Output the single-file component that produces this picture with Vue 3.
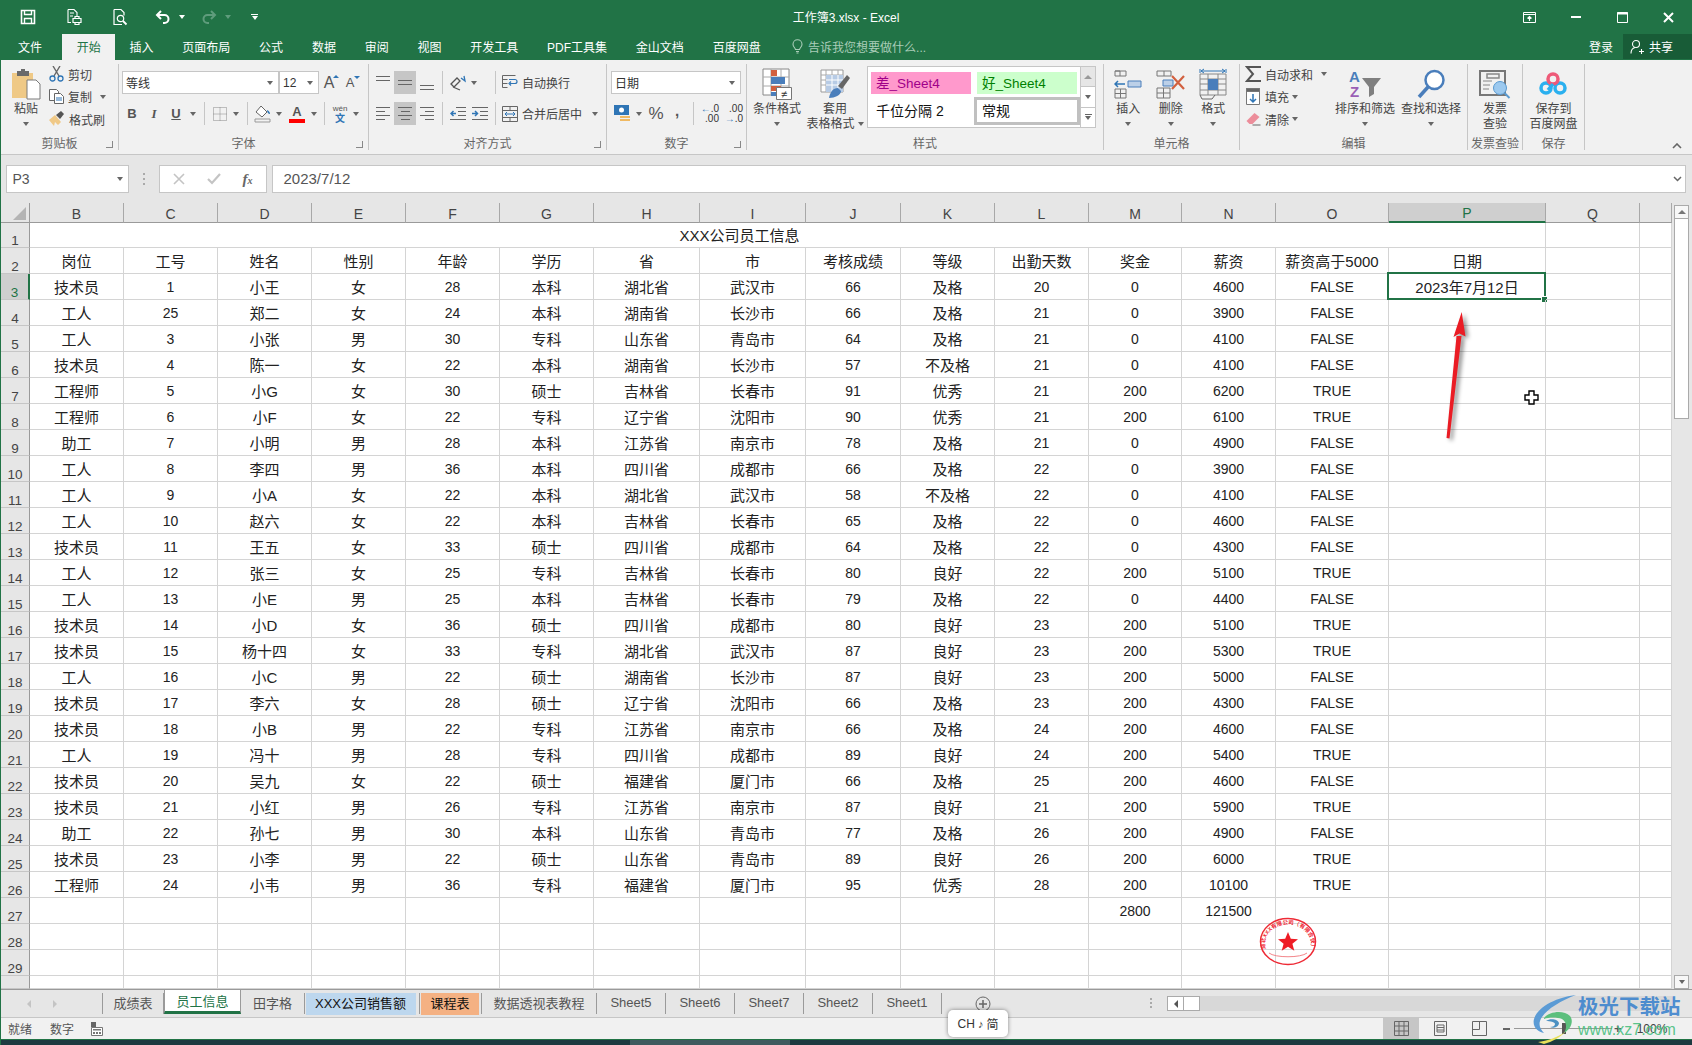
<template>
  <div class="app">
    <!-- 标题栏 -->
    <div class="titlebar">
      <div class="qat">
        <span class="qat-btn">
          <svg width="16" height="16" viewBox="0 0 16 16" fill="none" stroke="#fff" stroke-width="1.6"><path d="M1.5 1.5h13v13h-13z"/><path d="M4.5 1.5v4h7v-4M4.5 14.5v-5h7v5" stroke-width="1.4"/></svg>
        </span>
        <span class="qat-btn">
          <svg width="18" height="18" viewBox="0 0 18 18" fill="none" stroke="#fff" stroke-width="1.1"><path d="M3 1.5h6l3 3v4M3 1.5v13h3"/><path d="M5 5h4M5 8h3"/><path d="M8 10.5h8v4H8zM10 10.5v-2h4v2M10 14.5v2h4v-2" stroke-width="1.2"/></svg>
        </span>
        <span class="qat-btn">
          <svg width="18" height="18" viewBox="0 0 18 18" fill="none" stroke="#fff" stroke-width="1.2"><path d="M3 1.5h7l3 3v3M3 1.5v15h8"/><circle cx="9.5" cy="10.5" r="3.2"/><path d="M12 13l3.5 3.5" stroke-width="1.8"/></svg>
        </span>
        <span class="qat-undo">
          <svg width="16" height="14" viewBox="0 0 16 14" fill="none" stroke="#fff" stroke-width="2"><path d="M6 1L2 5l4 4"/><path d="M2 5h7.500a4 4 0 0 1 0 8H8"/></svg>
        </span>
        <i class="caret light qat-caret"></i>
        <span class="qat-redo">
          <svg width="16" height="14" viewBox="0 0 16 14" fill="none" stroke="#5f9c7c" stroke-width="2"><path d="M10 1l4 4-4 4"/><path d="M14 5H6.500a4 4 0 0 0 0 8H8"/></svg>
        </span>
        <i class="caret dim qat-caret"></i>
        <span class="qat-custom"><b></b><i class="caret light"></i></span>
      </div>
      <div class="doc-title">工作簿3.xlsx - Excel</div>
      <div class="win-btns">
        <span>
          <svg width="13" height="11" viewBox="0 0 13 11" fill="none" stroke="#fff"><path d="M.5.500h12v10H.5zM.5 2.500h12"/><path d="M6.500 9V4.500M4.500 6.500l2-2 2 2" stroke-width="1.200"/></svg>
        </span>
        <span><svg width="10" height="3" viewBox="0 0 10 3"><path d="M0 0h10v2H0z" fill="#fff"/></svg></span>
        <span>
          <svg width="11" height="11" viewBox="0 0 11 11" fill="none" stroke="#fff"><path d="M.5.500h10v10H.5z"/><path d="M0 1.500h11" stroke-width="2"/></svg>
        </span>
        <span>
          <svg width="11" height="11" viewBox="0 0 11 11" stroke="#fff" stroke-width="2"><path d="M1 1l9 9M10 1l-9 9"/></svg>
        </span>
      </div>
    </div>

    <!-- 选项卡 -->
    <div class="tabs-row">
      <span v-for="(t, i) in ribbonTabs" :key="t" class="r-tab" :class="{ active: i === 1, first: i === 0 }">{{ t }}</span>
      <span class="tell-me">
        <svg width="11" height="15" viewBox="0 0 11 15" fill="none" stroke="#a9cdb8" stroke-width="1.1"><path d="M3.500 10.500C3 8.500 1 8 1 5.200a4.500 4.500 0 0 1 9 0c0 2.800-2 3.300-2.500 5.300zM4 12.500h3M4.500 14h2"/></svg>
        告诉我您想要做什么...
      </span>
      <span class="login">登录</span>
      <span class="share">
        <svg width="14" height="16" viewBox="0 0 14 16" fill="none" stroke="#fff" stroke-width="1.100"><circle cx="6" cy="5" r="3.500"/><path d="M1 14.500c0-3.500 2-5.500 4-6M9 12.500h5M11.500 10v5"/></svg>
        共享
      </span>
    </div>

    <!-- 功能区 -->
    <div class="ribbon">
      <div class="group g-clip">
        <div class="g-body">
          <div class="big-btn paste">
            <div class="big-ico">
              <svg width="29" height="31" viewBox="0 0 29 31"><path d="M0 4h21v25H0z" fill="#efc986"/><path d="M5 2h4V0h4v2h4v5H5z" fill="#6a6a6a"/><path d="M15 11h9l4 4v15H15z" fill="#fff" stroke="#7a7a7a"/></svg>
            </div>
            <div class="big-txt">粘贴</div>
            <div class="big-arrow"><i class="caret"></i></div>
          </div>
          <div class="small-col clip-col">
            <div class="small-row">
              <svg class="s-ico" width="15" height="16" viewBox="0 0 15 16" fill="none"><path d="M4 0l6 10M11 0L5 10" stroke="#666" stroke-width="1.400"/><circle cx="3.500" cy="12.500" r="2.500" stroke="#2f75b5" stroke-width="1.300"/><circle cx="11.500" cy="12.500" r="2.500" stroke="#2f75b5" stroke-width="1.300"/></svg>
              <span>剪切</span>
            </div>
            <div class="small-row">
              <svg class="s-ico" width="15" height="15" viewBox="0 0 15 15" fill="#fff" stroke="#666"><path d="M.5.500h7l2 2v9h-9z"/><path d="M5.500 4.500h6l3 3v7h-9z"/><path d="M7 9h6M7 11h6" stroke="#2f75b5"/></svg>
              <span>复制</span>
              <i class="caret copy-caret"></i>
            </div>
            <div class="small-row">
              <svg class="s-ico" width="16" height="16" viewBox="0 0 16 16"><path d="M0 9l6-5 6 7-3 3-3-3-1 4z" fill="#f0c987"/><path d="M7 4l5-4 3 3-4 5z" fill="#555"/></svg>
              <span>格式刷</span>
            </div>
          </div>
        </div>
        <div class="g-label">剪贴板</div>
        <i class="launcher"></i>
      </div>

      <div class="group g-font">
        <div class="tool-rows">
          <div class="tool-row pl3">
            <div class="select font-name"><span>等线</span><i class="caret"></i></div>
            <div class="select font-size"><span>12</span><i class="caret"></i></div>
            <span class="grow-a">A<i class="mini up"></i></span>
            <span class="grow-a small">A<i class="mini down"></i></span>
          </div>
          <div class="tool-row pl2">
            <span class="tb w22 fmt"><b>B</b></span>
            <span class="tb w22 fmt"><i class="ital">I</i></span>
            <span class="tb w22 fmt"><b class="under">U</b></span>
            <span class="tb w12"><i class="caret"></i></span>
            <span class="vsep ml5"></span>
            <span class="tb w20 ml5">
              <svg width="14" height="14" viewBox="0 0 14 14" fill="none" stroke="#888" stroke-dasharray="1 1"><path d="M.5.500h13v13H.5zM7 .5v13M.5 7h13"/></svg>
            </span>
            <span class="tb w12"><i class="caret"></i></span>
            <span class="vsep ml5"></span>
            <span class="tb w20 ml4">
              <svg width="17" height="18" viewBox="0 0 17 18"><path d="M7 1l6 6-5 5-6-5z" fill="#fff" stroke="#666"/><path d="M13 5c2 1 3 2 3 4-2 0-3-2-3-4z" fill="#2f75b5"/><path d="M1 14h15v3H1z" fill="#f2f2f2" stroke="#999"/></svg>
            </span>
            <span class="tb w14"><i class="caret"></i></span>
            <span class="tb w22 color-a">A<i></i></span>
            <span class="tb w12"><i class="caret"></i></span>
            <span class="vsep ml4"></span>
            <span class="tb w22 ml4 wen">wén<b>文</b></span>
            <span class="tb w10"><i class="caret"></i></span>
          </div>
        </div>
        <div class="g-label">字体</div>
        <i class="launcher"></i>
      </div>

      <div class="group g-align">
        <div class="tool-rows">
          <div class="tool-row pl3">
            <span class="tb w22"><span class="al"><i></i><i></i></span></span>
            <span class="tb w22 on"><span class="al mid"><i></i><i></i></span></span>
            <span class="tb w22"><span class="al bot"><i></i><i></i></span></span>
            <span class="vsep ml4"></span>
            <span class="tb w22 ml4">
              <svg width="16" height="16" viewBox="0 0 16 16" fill="none" stroke="#555" stroke-width="1.300"><path d="M1 9l6-6 3 3-6 6zM3 12l7 3"/><path d="M11 3l4 3-1-5" stroke="#2f75b5"/></svg>
            </span>
            <span class="tb w10"><i class="caret"></i></span>
            <span class="vsep ml16"></span>
            <span class="tb w20 ml4">
              <svg width="16" height="15" viewBox="0 0 16 15" fill="none" stroke="#666"><path d="M.5.500h13M.5 4.500h5M.5 8.500h5M.5 12.500h5M.5.500v12"/><path d="M8 8.500h5a2 2 0 0 0 0-4H7M9 6.500l-2 2 2 2" stroke="#2f75b5" stroke-width="1.200"/></svg>
            </span>
            <span class="tool-text">自动换行</span>
          </div>
          <div class="tool-row pl3">
            <span class="tb w22"><span class="ah left"><i></i><i></i><i></i><i></i></span></span>
            <span class="tb w22 on"><span class="ah center"><i></i><i></i><i></i><i></i></span></span>
            <span class="tb w22"><span class="ah right"><i></i><i></i><i></i><i></i></span></span>
            <span class="vsep ml4"></span>
            <span class="tb w22 ml4">
              <svg width="16" height="13" viewBox="0 0 16 13" fill="none" stroke="#666"><path d="M6 .5h10M8 4.500h8M8 8.500h8M0 12.500h16"/><path d="M6 6.500H1M3.500 4l-2.500 2.500L3.500 9" stroke="#2f75b5" stroke-width="1.500"/></svg>
            </span>
            <span class="tb w22">
              <svg width="16" height="13" viewBox="0 0 16 13" fill="none" stroke="#666"><path d="M0 .5h16M8 4.500h8M8 8.500h8M0 12.500h16"/><path d="M0 6.500h5M3 4l2.500 2.500L3 9" stroke="#2f75b5" stroke-width="1.500"/></svg>
            </span>
            <span class="vsep ml4"></span>
            <span class="tb w20 ml4">
              <svg width="16" height="16" viewBox="0 0 16 16" fill="none" stroke="#666"><path d="M.5.500h15v15H.5zM.5 4.500h15M.5 11.500h15M8 .5v4M8 11.500v4"/><path d="M3 8h10M5 6L3 8l2 2M11 6l2 2-2 2" stroke="#2f75b5"/></svg>
            </span>
            <span class="tool-text">合并后居中</span>
            <span class="tb w10 ml8"><i class="caret"></i></span>
          </div>
        </div>
        <div class="g-label">对齐方式</div>
        <i class="launcher"></i>
      </div>

      <div class="group g-num">
        <div class="tool-rows">
          <div class="tool-row pl4"><div class="select num-fmt"><span>日期</span><i class="caret"></i></div></div>
          <div class="tool-row pl4">
            <span class="tb w22">
              <svg width="17" height="17" viewBox="0 0 17 17"><path d="M0 0h15v10H0z" fill="#2f75b5"/><circle cx="7.500" cy="5" r="2.500" fill="#fff"/><path d="M6 11h10v2H6zM6 14h10v2H6z" fill="#f0b962"/></svg>
            </span>
            <span class="tb w12"><i class="caret"></i></span>
            <span class="tb w22 pct">%</span>
            <span class="tb w20 comma">,</span>
            <span class="vsep ml6"></span>
            <span class="tb w22 ml3 dec"><em>←</em>.0<br />.00</span>
            <span class="tb w24 dec">.00<br /><em>→</em>.0</span>
          </div>
        </div>
        <div class="g-label">数字</div>
        <i class="launcher"></i>
      </div>

      <div class="group g-style">
        <div class="g-body">
          <div class="big-btn cond">
            <div class="big-ico">
              <svg width="30" height="32" viewBox="0 0 30 32"><path d="M1 1h26v26H1z" fill="#fff" stroke="#888"/><path d="M1 9h26M1 18h26M9 1v26M19 1v26" stroke="#aaa"/><path d="M9 2h6v6H9z" fill="#d2603f"/><path d="M9 9h14v7H9z" fill="#4a7ebb"/><path d="M9 18h10v5H9z" fill="#d2603f"/><path d="M9 24h5v4H9z" fill="#4a7ebb"/><path d="M14.500 19.500h15v12h-15z" fill="#fff" stroke="#777"/><text x="22" y="30" font-size="11" text-anchor="middle" fill="#333">≠</text></svg>
            </div>
            <div class="big-txt">条件格式</div>
            <div class="big-arrow"><i class="caret"></i></div>
          </div>
          <div class="big-btn tblfmt">
            <div class="big-ico">
              <svg width="30" height="30" viewBox="0 0 30 30"><path d="M1 1h22v22H1z" fill="#fff" stroke="#999"/><path d="M1 6h22M1 11h22M1 16h22M6 1v22M12 1v22M18 1v22" stroke="#aaa"/><path d="M6 6h17v17H6z" fill="#b7cbe5"/><path d="M6 11h17M6 16h17M12 6v17M18 6v17" stroke="#fff"/><path d="M18 17l9-11 3 3-8 11z" fill="#666"/><path d="M9 29c1-6 4-10 9-10l3 3c0 4-6 7-12 7z" fill="#4a7ebb"/></svg>
            </div>
            <div class="big-txt">套用</div>
            <div class="big-txt row-txt">表格格式<i class="caret"></i></div>
          </div>
          <div class="gallery">
            <div class="gal-grid">
              <span class="gal-cell bad">差_Sheet4</span>
              <span class="gal-cell good">好_Sheet4</span>
              <span class="gal-cell plain">千位分隔 2</span>
              <span class="gal-cell normal">常规</span>
            </div>
            <div class="gal-scroll">
              <span class="disabled"><i class="tri-up"></i></span>
              <span><i class="caret"></i></span>
              <span class="more"><b></b><i class="caret"></i></span>
            </div>
          </div>
        </div>
        <div class="g-label">样式</div>
      </div>

      <div class="group g-cells">
        <div class="g-body">
          <div class="big-btn cell-btn">
            <div class="big-ico">
              <svg width="28" height="30" viewBox="0 0 28 30" fill="none" stroke="#777"><path d="M1 2h11v5H1zM1 2h5v5M1 20h11v9H1zM1 24.500h11M6.500 20v9"/><path d="M14 12h13v6H14z" fill="#bcd0e8" stroke="#4a7ebb"/><path d="M11 15H1M4 12l-3 3 3 3" stroke="#2f75b5" stroke-width="1.500"/></svg>
            </div>
            <div class="big-txt">插入</div>
            <div class="big-arrow"><i class="caret"></i></div>
          </div>
          <div class="big-btn cell-btn">
            <div class="big-ico">
              <svg width="30" height="30" viewBox="0 0 30 30" fill="none" stroke="#777"><path d="M1 2h14v5H1zM8 2v5M1 19h13v10H1zM1 24h13M7.500 19v10"/><path d="M7 11h10v6H7z" fill="#bcd0e8" stroke="#4a7ebb"/><path d="M16 7l12 13M28 7L16 20" stroke="#d2603f" stroke-width="2.200"/></svg>
            </div>
            <div class="big-txt">删除</div>
            <div class="big-arrow"><i class="caret"></i></div>
          </div>
          <div class="big-btn cell-btn">
            <div class="big-ico">
              <svg width="28" height="32" viewBox="0 0 28 32" fill="none" stroke="#888"><path d="M1 1v4M27 1v4" stroke="#2f75b5"/><path d="M2 3h24M5 1L2 3l3 2M23 1l3 2-3 2" stroke="#2f75b5"/><path d="M1 6h26v21H1zM1 11h26M1 16h26M1 22h26M9 6v21M19 6v21"/><path d="M9 11h10v11H9z" fill="#4a7ebb" stroke="none"/><path d="M1 27l2 4h10l3-4" stroke="#666"/></svg>
            </div>
            <div class="big-txt">格式</div>
            <div class="big-arrow"><i class="caret"></i></div>
          </div>
        </div>
        <div class="g-label">单元格</div>
      </div>

      <div class="group g-edit">
        <div class="g-body">
          <div class="small-col edit-col">
            <div class="small-row">
              <svg class="s-ico" width="16" height="16" viewBox="0 0 16 16" fill="none" stroke="#555" stroke-width="2"><path d="M15 2V1H2l6 7-6 7h13v-1"/></svg>
              <span>自动求和</span>
              <i class="caret sum-caret"></i>
            </div>
            <div class="small-row">
              <svg class="s-ico" width="14" height="17" viewBox="0 0 14 17" fill="#fff" stroke="#777"><path d="M.5.500h13v16H.5z"/><path d="M.5.500h13v3H.5z" fill="#666"/><path d="M7 6v8M4 11l3 3 3-3" stroke="#2f75b5" stroke-width="1.500" fill="none"/></svg>
              <span>填充</span>
              <i class="caret after-caret"></i>
            </div>
            <div class="small-row">
              <svg class="s-ico" width="15" height="14" viewBox="0 0 15 14"><path d="M1 9l8-8 5 4-7 7H4z" fill="#ec8d9a"/><path d="M7 13h8" stroke="#666"/></svg>
              <span>清除</span>
              <i class="caret after-caret"></i>
            </div>
          </div>
          <div class="big-btn sort-btn">
            <div class="big-ico">
              <svg width="32" height="30" viewBox="0 0 32 30"><text x="0" y="13" font-size="15" font-weight="700" fill="#4a7ebb">A</text><text x="1" y="28" font-size="15" font-weight="700" fill="#9a5fb5">Z</text><path d="M13 9h19l-7 9v7l-5 3V18z" fill="#7f7f7f"/></svg>
            </div>
            <div class="big-txt">排序和筛选</div>
            <div class="big-arrow"><i class="caret"></i></div>
          </div>
          <div class="big-btn find-btn">
            <div class="big-ico">
              <svg width="28" height="30" viewBox="0 0 28 30" fill="none"><circle cx="17.500" cy="11" r="9" stroke="#4a7ebb" stroke-width="2.500" fill="#fff"/><path d="M11 18L2 28" stroke="#4a7ebb" stroke-width="3.500"/></svg>
            </div>
            <div class="big-txt">查找和选择</div>
            <div class="big-arrow"><i class="caret"></i></div>
          </div>
        </div>
        <div class="g-label">编辑</div>
      </div>

      <div class="group g-inv">
        <div class="g-body center">
          <div class="big-btn">
            <div class="big-ico">
              <svg width="32" height="30" viewBox="0 0 32 30" fill="none"><path d="M1 2h25v24H1z" fill="#f1f1f1" stroke="#777" stroke-width="2"/><path d="M8 5h12v4H8z" stroke="#888" stroke-width="1.500"/><path d="M4 12h9M4 16h7M4 20h6" stroke="#888"/><circle cx="21" cy="19" r="6.500" fill="#9cc9ef" stroke="#5a9ad0"/><path d="M25.500 24l5 5" stroke="#5a9ad0" stroke-width="2"/></svg>
            </div>
            <div class="big-txt">发票</div>
            <div class="big-txt">查验</div>
          </div>
        </div>
        <div class="g-label">发票查验</div>
      </div>

      <div class="group g-save">
        <div class="g-body center">
          <div class="big-btn">
            <div class="big-ico">
              <svg width="28" height="24" viewBox="0 0 28 24" fill="none" stroke-width="3.500"><circle cx="7" cy="16" r="5" stroke="#2ab0ef"/><circle cx="21" cy="16" r="5" stroke="#2ab0ef"/><circle cx="14" cy="7" r="5" stroke="#ee5a78"/><path d="M9 18l5-6" stroke="#2ab0ef"/></svg>
            </div>
            <div class="big-txt">保存到</div>
            <div class="big-txt">百度网盘</div>
          </div>
        </div>
        <div class="g-label">保存</div>
      </div>

      <svg class="collapse" width="10" height="6" viewBox="0 0 10 6" fill="none" stroke="#666" stroke-width="1.600"><path d="M1 5l4-4 4 4"/></svg>
    </div>

    <!-- 编辑栏 -->
    <div class="formula-bar">
      <div class="name-box"><span>P3</span><i class="caret"></i></div>
      <span class="grip"></span>
      <div class="fx-btns">
        <svg width="12" height="12" viewBox="0 0 12 12" stroke="#c4c4c4" stroke-width="1.600"><path d="M1 1l10 10M11 1L1 11"/></svg>
        <svg width="14" height="12" viewBox="0 0 14 12" fill="none" stroke="#c4c4c4" stroke-width="2.200"><path d="M1 6l4 4 8-9"/></svg>
        <i class="fx">f<small>x</small></i>
      </div>
      <div class="formula-input"><span>2023/7/12</span>
        <svg width="9" height="6" viewBox="0 0 9 6" fill="none" stroke="#666" stroke-width="1.500"><path d="M1 1l3.500 3.500L8 1"/></svg>
      </div>
    </div>

    <!-- 表格 -->
    <div class="sheet-area">
      <div class="sheet">
        <div class="row head-row">
          <div class="corner"><i></i></div>
          <div v-for="c in colLetters" :key="c" class="col-head" :class="{ cur: c === 'P' }">{{ c }}</div>
          <div class="col-head"></div>
        </div>
        <div class="row row-first">
          <div class="row-head">1</div>
          <div class="cell merged">XXX公司员工信息</div>
          <div class="cell"></div>
          <div class="cell"></div>
        </div>
        <div v-for="r in rows" :key="r.n" class="row" :class="{ 'row-cut': r.n === 30 }">
          <div class="row-head" :class="{ cur: r.n === 3 }">{{ r.n === 30 ? '' : r.n }}</div>
          <div
            v-for="(v, i) in r.cells"
            :key="i"
            class="cell"
            :class="{ latin: isLatin(v), selected: r.n === 3 && i === 14 }"
          >{{ v }}</div>
        </div>
      </div>
      <div class="v-scroll">
        <span class="sb-btn"><i class="tri-up"></i></span>
        <span class="sb-thumb"></span>
        <span class="sb-btn down"><i class="caret"></i></span>
      </div>
    </div>

    <!-- 工作表标签 -->
    <div class="tabbar">
      <div class="tab-nav">
        <i class="nav-l"></i>
        <i class="nav-r"></i>
      </div>
      <div
        v-for="t in sheetTabs"
        :key="t.name"
        class="s-tab"
        :class="[t.cls]"
        :style="{ width: t.w + 'px' }"
      ><span>{{ t.name }}</span></div>
      <span class="add-sheet">
        <svg width="16" height="16" viewBox="0 0 16 16" fill="none" stroke="#666"><circle cx="8" cy="8" r="7"/><path d="M8 4v8M4 8h8" stroke-width="1.500"/></svg>
      </span>
      <span class="h-dots"></span>
      <div class="h-scroll">
        <span class="h-arrow"><i class="nav-l dark"></i></span>
        <span class="h-thumb"></span>
      </div>
    </div>

    <!-- 状态栏 -->
    <div class="statusbar">
      <span class="st-1">就绪</span>
      <span class="st-2">数字</span>
      <svg class="st-ico" width="12" height="14" viewBox="0 0 12 14"><path d="M0 0h5v5H0z" fill="#666"/><path d="M.5 5.500h11v8H.5z" fill="#fff" stroke="#777"/><path d="M2 7h8v1.500H2zM2 10h2v2H2zM5 10h2v2H5zM8 10h2v2H8z" fill="#777"/></svg>
      <span class="view on">
        <svg width="15" height="15" viewBox="0 0 15 15" fill="none" stroke="#666"><path d="M.5.500h14v14H.5zM.5 5h14M.5 10h14M5 .5v14M10 .5v14"/></svg>
      </span>
      <span class="view">
        <svg width="15" height="15" viewBox="0 0 15 15" fill="none" stroke="#666"><path d="M1.500.500h12v14h-12z"/><path d="M4 4h7v7H4zM4 6.500h7M4 9h7"/></svg>
      </span>
      <span class="view">
        <svg width="15" height="15" viewBox="0 0 15 15" fill="none" stroke="#666"><path d="M.5.500h14v14H.5zM7.500.5v8H.5"/></svg>
      </span>
      <span class="zoom-minus"></span>
      <span class="zoom-line"><i></i></span>
      <span class="zoom-plus">+</span>
      <span class="zoom-val">100%</span>
    </div>
    <div class="taskbar"><i></i></div>

    <!-- 覆盖层 -->
    <svg class="arrow" width="40" height="140" viewBox="0 0 40 140">
      <path d="M6.500 128l3 .5L21.500 26h-5zM21.700 2L13.500 27l6-3.500 6 3z" fill="#ea1c24"/>
    </svg>
    <svg class="cursor" width="15" height="15" viewBox="0 0 15 15"><path d="M5 1h5v4h4v5h-4v4H5v-4H1V5h4z" fill="#fff" stroke="#000" stroke-width="1.400"/></svg>
    <svg class="stamp" width="58" height="49" viewBox="0 0 58 49">
      <ellipse cx="29" cy="24.500" rx="27.500" ry="23" fill="none" stroke="#ee2a35" stroke-width="1.500"/>
      <defs><path id="stamp-arc" d="M7 32A23 19 0 1 1 51 32"/></defs>
      <text font-size="5.500" font-weight="700" fill="#ee2a35"><textPath href="#stamp-arc">湖北XXX有限公司（有限合伙）</textPath></text>
      <path d="M29 15l2.800 6.800 7.200.4-5.600 4.500 1.900 7-6.300-4-6.300 4 1.900-7-5.600-4.500 7.200-.4z" fill="#ee1c25"/>
      <path d="M10 36c6 5 32 5 38 0" fill="none" stroke="#f3858a"/>
    </svg>
    <div class="ime">CH <span class="moon">♪</span> 简</div>
    <div class="watermark">
      <svg width="46" height="50" viewBox="0 0 46 50" fill="none">
        <path d="M44 1C26 3 6 12 2 25c-2 8 4 13 10 14-5-5-6-10-2-16C15 15 30 6 44 1z" fill="#5b9bd5"/>
        <path d="M12 24c6-7 20-8 26-2 4 5 1 13-6 17 3-5 3-11-2-14-5-2-13-2-18 0z" fill="#5cbf7d"/>
        <path d="M14 27c4-3 12-2 13 2 0 3-4 6-9 4 3 0 5-1 5-3 0-2-5-3-9-3z" fill="#4a90c2"/>
        <path d="M6 48c8-1 22-5 28-11-5 6-14 11-22 13z" fill="#e8e05a"/>
      </svg>
      <div class="wm-text">
        <div class="wm-cn">极光下载站</div>
        <div class="wm-url">www.xz7.com</div>
      </div>
    </div>
  </div>
</template>

<script setup>
const ribbonTabs = ['文件', '开始', '插入', '页面布局', '公式', '数据', '审阅', '视图', '开发工具', 'PDF工具集', '金山文档', '百度网盘']

const colLetters = 'BCDEFGHIJKLMNOPQ'.split('')

const data = [
  '岗位 工号 姓名 性别 年龄 学历 省 市 考核成绩 等级 出勤天数 奖金 薪资 薪资高于5000 日期',
  '技术员 1 小王 女 28 本科 湖北省 武汉市 66 及格 20 0 4600 FALSE 2023年7月12日',
  '工人 25 郑二 女 24 本科 湖南省 长沙市 66 及格 21 0 3900 FALSE',
  '工人 3 小张 男 30 专科 山东省 青岛市 64 及格 21 0 4100 FALSE',
  '技术员 4 陈一 女 22 本科 湖南省 长沙市 57 不及格 21 0 4100 FALSE',
  '工程师 5 小G 女 30 硕士 吉林省 长春市 91 优秀 21 200 6200 TRUE',
  '工程师 6 小F 女 22 专科 辽宁省 沈阳市 90 优秀 21 200 6100 TRUE',
  '助工 7 小明 男 28 本科 江苏省 南京市 78 及格 21 0 4900 FALSE',
  '工人 8 李四 男 36 本科 四川省 成都市 66 及格 22 0 3900 FALSE',
  '工人 9 小A 女 22 本科 湖北省 武汉市 58 不及格 22 0 4100 FALSE',
  '工人 10 赵六 女 22 本科 吉林省 长春市 65 及格 22 0 4600 FALSE',
  '技术员 11 王五 女 33 硕士 四川省 成都市 64 及格 22 0 4300 FALSE',
  '工人 12 张三 女 25 专科 吉林省 长春市 80 良好 22 200 5100 TRUE',
  '工人 13 小E 男 25 本科 吉林省 长春市 79 及格 22 0 4400 FALSE',
  '技术员 14 小D 女 36 硕士 四川省 成都市 80 良好 23 200 5100 TRUE',
  '技术员 15 杨十四 女 33 专科 湖北省 武汉市 87 良好 23 200 5300 TRUE',
  '工人 16 小C 男 22 硕士 湖南省 长沙市 87 良好 23 200 5000 FALSE',
  '技术员 17 李六 女 28 硕士 辽宁省 沈阳市 66 及格 23 200 4300 FALSE',
  '技术员 18 小B 男 22 专科 江苏省 南京市 66 及格 24 200 4600 FALSE',
  '工人 19 冯十 男 28 专科 四川省 成都市 89 良好 24 200 5400 TRUE',
  '技术员 20 吴九 女 22 硕士 福建省 厦门市 66 及格 25 200 4600 FALSE',
  '技术员 21 小红 男 26 专科 江苏省 南京市 87 良好 21 200 5900 TRUE',
  '助工 22 孙七 男 30 本科 山东省 青岛市 77 及格 26 200 4900 FALSE',
  '技术员 23 小李 男 22 硕士 山东省 青岛市 89 良好 26 200 6000 TRUE',
  '工程师 24 小韦 男 36 专科 福建省 厦门市 95 优秀 28 200 10100 TRUE'
]

// B 到 Q 再加一列空白，共 17 格
const toCells = (line) => {
  const cells = line.split(' ')
  while (cells.length < 17) cells.push('')
  return cells
}

const rows = data.map((line, i) => ({ n: i + 2, cells: toCells(line) }))
const totals = toCells('')
totals[0] = ''
totals[11] = '2800'
totals[12] = '121500'
rows.push({ n: 27, cells: totals })
rows.push({ n: 28, cells: toCells('') })
rows.push({ n: 29, cells: toCells('') })
rows.push({ n: 30, cells: toCells('') })

const isLatin = (v) => /^[\x20-\x7e]+$/.test(v)

const sheetTabs = [
  { name: '成绩表', w: 61 },
  { name: '员工信息', w: 77, cls: 'active' },
  { name: '田字格', w: 64 },
  { name: 'XXX公司销售额', w: 115, cls: 'blue' },
  { name: '课程表', w: 62, cls: 'orange' },
  { name: '数据透视表教程', w: 115 },
  { name: 'Sheet5', w: 69 },
  { name: 'Sheet6', w: 69 },
  { name: 'Sheet7', w: 69 },
  { name: 'Sheet2', w: 69 },
  { name: 'Sheet1', w: 69 }
]
</script>

<style>
html, body {
  margin: 0;
  padding: 0;
  background: #e6e6e6;
}
</style>

<style scoped>
* {
  box-sizing: border-box;
}

.app {
  --cols: 29px 94px 94px 94px 94px 94px 94px 106px 106px 95px 94px 94px 93px 94px 113px 157px 94px 32px;
  position: relative;
  width: 1692px;
  height: 1045px;
  overflow: hidden;
  background: #e6e6e6;
  border-left: 1px solid #217346;
  font-family: "Liberation Sans", "Noto Sans CJK SC", sans-serif;
  font-size: 12px;
  color: #444;
}

i {
  font-style: normal;
}

.caret {
  display: inline-block;
  width: 0;
  height: 0;
  border-left: 3.5px solid transparent;
  border-right: 3.5px solid transparent;
  border-top: 4px solid #666;
}

.caret.light {
  border-top-color: #fff;
}

.caret.dim {
  border-top-color: #5f9c7c;
}

/* 标题栏 */
.titlebar {
  display: grid;
  grid-template-columns: 1fr auto 1fr;
  align-items: center;
  height: 34px;
  background: #217346;
  margin-left: -1px;
}

.qat {
  display: flex;
  align-items: center;
  padding-left: 5px;
}

.qat-btn {
  display: flex;
  justify-content: center;
  width: 46px;
}

.qat-undo {
  display: flex;
  justify-content: center;
  width: 20px;
  margin-left: 10px;
}

.qat-redo {
  display: flex;
  justify-content: center;
  width: 20px;
  margin-left: 14px;
}

.qat-caret {
  margin-left: 6px;
}

.qat-custom {
  display: flex;
  flex-direction: column;
  align-items: center;
  gap: 1px;
  margin-left: 20px;
}

.qat-custom b {
  display: block;
  width: 7px;
  height: 1px;
  background: #fff;
}

.doc-title {
  color: #fff;
  font-size: 12px;
  padding-bottom: 2px;
  white-space: nowrap;
}

.win-btns {
  display: flex;
  justify-content: flex-end;
}

.win-btns span {
  display: flex;
  align-items: center;
  justify-content: center;
  width: 46.500px;
}

/* 选项卡 */
.tabs-row {
  display: flex;
  align-items: stretch;
  height: 26px;
  margin-left: -1px;
  padding-left: 3.500px;
  background: #217346;
}

.r-tab {
  display: flex;
  align-items: center;
  padding: 0 14.400px 2px;
  font-size: 12px;
  color: #fff;
  white-space: nowrap;
}

.r-tab.first {
  margin-right: 6px;
}

.r-tab.active {
  background: #f1f1f1;
  color: #217346;
}

.tell-me {
  display: flex;
  align-items: center;
  gap: 5px;
  margin-left: 17px;
  padding-bottom: 1px;
  color: #a9cdb8;
  font-size: 12px;
}

.login {
  display: flex;
  align-items: center;
  margin-left: auto;
  margin-right: 10px;
  padding-bottom: 2px;
  color: #fff;
}

.share {
  display: flex;
  align-items: center;
  gap: 5px;
  width: 69px;
  padding-left: 7px;
  margin-bottom: 1px;
  background: #185c37;
  color: #fff;
}

/* 功能区 */
.ribbon {
  position: relative;
  display: flex;
  height: 95px;
  background: #f1f1f1;
  border-bottom: 1px solid #c6c6c6;
}

.group {
  position: relative;
  display: flex;
  flex-direction: column;
  height: 86px;
  margin-top: 4px;
  border-right: 1px solid #c6c6c6;
  flex-shrink: 0;
}

.g-clip { width: 118px; }
.g-font { width: 250px; }
.g-align { width: 238px; }
.g-num { width: 140px; }
.g-style { width: 357px; }
.g-cells { width: 136px; }
.g-edit { width: 228px; }
.g-inv { width: 55px; }
.g-save { width: 62px; }

.g-body {
  display: flex;
  flex: 1;
  padding-top: 3px;
}

.g-body.center {
  justify-content: center;
}

.g-label {
  height: 18px;
  margin-bottom: -3px;
  line-height: 18px;
  text-align: center;
  color: #666;
  white-space: nowrap;
}

.launcher {
  position: absolute;
  right: 5px;
  bottom: 2px;
  width: 7px;
  height: 7px;
  border-left: 1px solid #888;
  border-bottom: 1px solid #888;
  transform: scaleX(-1);
}

.collapse {
  position: absolute;
  right: 10px;
  bottom: 5px;
}

.big-btn {
  display: flex;
  flex-direction: column;
  align-items: center;
}

.big-ico {
  display: flex;
  align-items: center;
  height: 34.500px;
}

.big-txt {
  line-height: 15px;
  white-space: nowrap;
}

.big-arrow {
  display: flex;
  align-items: center;
  height: 15px;
}

.row-txt .caret {
  margin-left: 3px;
  vertical-align: middle;
}

.paste {
  width: 30px;
  margin-left: 10px;
}

.small-col {
  display: flex;
  flex-direction: column;
  margin-top: -4px;
}

.small-row {
  display: flex;
  align-items: center;
  height: 22.500px;
  white-space: nowrap;
}

.s-ico {
  flex-shrink: 0;
}

.clip-col {
  margin-left: 8px;
}

.clip-col .s-ico {
  margin-right: 4px;
}

.copy-caret {
  margin-left: 8px;
}

.edit-col {
  width: 86px;
  margin-left: 5px;
}

.edit-col .s-ico {
  width: 16px;
  margin-right: 4px;
}

.sum-caret {
  margin-left: 8px;
}

.after-caret {
  margin-left: 3px;
}

.sort-btn,
.find-btn {
  width: 64px;
  margin-left: 2px;
}

.cond {
  width: 60px;
}

.tblfmt {
  width: 56px;
}

.cell-btn {
  width: 42.500px;
}

.g-cells .g-body {
  padding-left: 3px;
}

.tool-rows {
  display: flex;
  flex-direction: column;
  gap: 8px;
  flex: 1;
  padding-top: 7px;
}

.tool-row {
  display: flex;
  align-items: center;
  height: 23px;
}

.pl2 { padding-left: 2px; }
.pl3 { padding-left: 3px; }
.pl4 { padding-left: 4px; }
.ml3 { margin-left: 3px; }
.ml4 { margin-left: 4px; }
.ml5 { margin-left: 5px; }
.ml6 { margin-left: 6px; }
.ml8 { margin-left: 8px; }
.ml16 { margin-left: 16px; }
.w10 { width: 10px; }
.w12 { width: 12px; }
.w14 { width: 14px; }
.w20 { width: 20px; }
.w22 { width: 22px; }
.w24 { width: 24px; }

.tb {
  display: flex;
  align-items: center;
  justify-content: center;
  height: 23px;
  flex-shrink: 0;
}

.tb.on {
  background: #c6c6c6;
}

.vsep {
  width: 1px;
  height: 23px;
  background: #c6c6c6;
  flex-shrink: 0;
}

.select {
  display: flex;
  align-items: center;
  justify-content: space-between;
  height: 23px;
  padding: 0 5px 0 3px;
  background: #fff;
  border: 1px solid #c6c6c6;
  font-size: 12px;
  color: #333;
}

.font-name { width: 157px; }
.font-size { width: 40px; margin-left: 0; }
.num-fmt { width: 130px; }

.grow-a {
  position: relative;
  width: 22px;
  margin-left: -1px;
  text-align: center;
  font-size: 16px;
  color: #555;
}

.grow-a.small {
  font-size: 13px;
}

.mini {
  position: absolute;
  top: 1px;
  right: 1px;
  border-left: 3px solid transparent;
  border-right: 3px solid transparent;
}

.mini.up {
  border-bottom: 3px solid #2f75b5;
}

.mini.down {
  border-top: 3px solid #2f75b5;
}

.fmt {
  font-size: 13px;
  color: #555;
}

.ital {
  font-family: "Liberation Serif", serif;
  font-style: italic;
  font-weight: 700;
}

.under {
  text-decoration: underline;
}

.color-a {
  position: relative;
  font-size: 13px;
  font-weight: 700;
  color: #555;
  padding-bottom: 5px;
}

.color-a i {
  position: absolute;
  left: 3px;
  right: 3px;
  bottom: 2px;
  height: 4px;
  background: #f00;
}

.wen {
  flex-direction: column;
  font-size: 8px;
  line-height: 9px;
  color: #555;
}

.wen b {
  font-size: 10px;
  line-height: 11px;
  color: #2f75b5;
}

.al {
  display: flex;
  flex-direction: column;
  gap: 3px;
  width: 14px;
  height: 14px;
}

.al.mid {
  justify-content: center;
}

.al.bot {
  justify-content: flex-end;
}

.al i {
  display: block;
  height: 1px;
  background: #666;
}

.ah {
  display: flex;
  flex-direction: column;
  gap: 3px;
  width: 14px;
}

.ah i {
  display: block;
  height: 1px;
  background: #666;
}

.ah i:nth-child(even) {
  width: 9px;
}

.ah.center {
  align-items: center;
}

.ah.center i:nth-child(odd),
.ah.left i:nth-child(odd),
.ah.right i:nth-child(odd) {
  width: 14px;
}

.ah.right {
  align-items: flex-end;
}

.tool-text {
  margin-left: 2px;
  white-space: nowrap;
}

.pct {
  font-size: 17px;
  color: #555;
}

.comma {
  font-size: 15px;
  font-weight: 700;
  color: #555;
  padding-bottom: 6px;
}

.dec {
  display: block;
  font-size: 10px;
  line-height: 10px;
  text-align: right;
  color: #333;
  padding-top: 2px;
}

.dec em {
  font-style: normal;
  color: #2f75b5;
}

/* 样式库 */
.gallery {
  display: flex;
  width: 229px;
  height: 62px;
  margin-left: 4px;
  margin-top: -1px;
  background: #fff;
  border: 1px solid #c6c6c6;
}

.gal-grid {
  display: grid;
  grid-template-columns: 100px 100px;
  grid-template-rows: 22px 22px;
  column-gap: 6px;
  row-gap: 6px;
  padding: 5px 0 0 3px;
}

.gal-cell {
  display: flex;
  align-items: center;
  padding: 0 0 2px 5px;
  font-size: 13.500px;
  white-space: nowrap;
}

.bad {
  background: #ff99cc;
  color: #a0008a;
}

.good {
  background: #ccffcc;
  color: #008000;
}

.plain {
  font-size: 14px;
  color: #111;
}

.normal {
  font-size: 14px;
  color: #111;
  box-shadow: 0 0 0 3px #c0c0c0;
}

.gal-scroll {
  display: flex;
  flex-direction: column;
  width: 15px;
  margin-left: auto;
  border-left: 1px solid #c6c6c6;
}

.gal-scroll span {
  display: flex;
  flex-direction: column;
  align-items: center;
  justify-content: center;
  gap: 1px;
  flex: 1;
  border-bottom: 1px solid #c6c6c6;
}

.gal-scroll span:last-child {
  border-bottom: 0;
}

.gal-scroll .disabled {
  background: #e6e6e6;
}

.gal-scroll .more b {
  display: block;
  width: 7px;
  height: 1px;
  background: #666;
}

.tri-up {
  display: inline-block;
  width: 0;
  height: 0;
  border-left: 4px solid transparent;
  border-right: 4px solid transparent;
  border-bottom: 4px solid #999;
}

/* 编辑栏 */
.formula-bar {
  display: flex;
  align-items: stretch;
  height: 35px;
  padding: 10px 6px 0 4.500px;
  background: #e6e6e6;
}

.name-box {
  display: flex;
  align-items: center;
  justify-content: space-between;
  width: 123px;
  height: 28px;
  padding: 0 5px 1px 6px;
  background: #fff;
  border: 1px solid #c6c6c6;
  font-size: 14px;
  color: #555;
}

.grip {
  width: 2px;
  height: 12px;
  margin: 8px 14px 0 14px;
  background: repeating-linear-gradient(#aaa 0 2px, transparent 2px 5px);
}

.fx-btns {
  display: flex;
  align-items: center;
  justify-content: space-between;
  width: 108px;
  height: 28px;
  padding: 0 13px;
  background: #fff;
  border: 1px solid #c6c6c6;
}

.fx {
  font-family: "Liberation Serif", serif;
  font-style: italic;
  font-weight: 700;
  font-size: 15px;
  color: #666;
}

.fx small {
  font-size: 10px;
}

.formula-input {
  display: flex;
  align-items: center;
  justify-content: space-between;
  flex: 1;
  height: 28px;
  margin-left: 5px;
  padding: 0 3px 1px 11px;
  background: #fff;
  border: 1px solid #c6c6c6;
  font-size: 15px;
  color: #555;
}

/* 表格 */
.sheet-area {
  display: flex;
  height: 799px;
  padding-top: 13px;
  background: #e6e6e6;
}

.sheet {
  width: 1671px;
  height: 786px;
  overflow: hidden;
  background: #fff;
}

.row {
  display: grid;
  grid-template-columns: var(--cols);
  height: 26px;
}

.head-row {
  height: 20px;
}

.row-first {
  height: 25px;
}

.row-first .merged {
  grid-column: span 15;
  padding-right: 96px;
}

.row-cut {
  height: 13px;
}

.corner {
  position: relative;
  background: #e6e6e6;
  border-right: 1px solid #9a9a9a;
  border-bottom: 1px solid #9a9a9a;
}

.corner i {
  position: absolute;
  right: 3px;
  bottom: 2px;
  border-style: solid;
  border-width: 0 0 13px 13px;
  border-color: transparent transparent #b4b4b4 transparent;
}

.col-head {
  display: flex;
  align-items: flex-end;
  justify-content: center;
  background: #e6e6e6;
  border-right: 1px solid #a8a8a8;
  border-bottom: 1px solid #9a9a9a;
  font-size: 14px;
  line-height: 16px;
  color: #444;
}

.col-head.cur {
  background: #cfcfcf;
  border-bottom: 2px solid #217346;
  color: #217346;
}

.row-head {
  display: flex;
  align-items: flex-end;
  justify-content: center;
  background: #e6e6e6;
  border-right: 1px solid #9a9a9a;
  border-bottom: 1px solid #c6c6c6;
  font-size: 13.500px;
  line-height: 13px;
  color: #444;
}

.row-head.cur {
  background: #cfcfcf;
  border-right: 2px solid #217346;
  color: #217346;
}

.cell {
  position: relative;
  display: flex;
  align-items: center;
  justify-content: center;
  padding-bottom: 1px;
  border-right: 1px solid #d4d4d4;
  border-bottom: 1px solid #d4d4d4;
  font-size: 15px;
  color: #222;
  white-space: nowrap;
}

.cell.latin {
  padding: 1px 0 0;
  font-size: 14px;
}

.cell.selected::before {
  content: "";
  position: absolute;
  inset: -2px -1px -1px -2px;
  border: 2px solid #217346;
}

.cell.selected::after {
  content: "";
  position: absolute;
  right: -2px;
  bottom: -3px;
  width: 5px;
  height: 5px;
  background: #217346;
  outline: 1px solid #fff;
}

.v-scroll {
  display: flex;
  flex-direction: column;
  width: 16px;
  height: 786px;
  margin-left: 2px;
  padding-top: 2px;
}

.sb-btn {
  display: flex;
  align-items: center;
  justify-content: center;
  width: 15px;
  height: 14px;
  background: #f7f7f7;
  border: 1px solid #aaa;
  flex-shrink: 0;
}

.sb-btn .tri-up {
  border-bottom-color: #777;
}

.sb-thumb {
  display: block;
  width: 15px;
  height: 200px;
  background: #fff;
  border: 1px solid #aaa;
  border-top: 0;
}

.sb-btn.down {
  margin-top: auto;
}

/* 工作表标签 */
.tabbar {
  display: flex;
  align-items: flex-start;
  height: 29px;
  background: #e6e6e6;
  border-top: 1px solid #9a9a9a;
  border-bottom: 1px solid #c6c6c6;
}

.tab-nav {
  display: flex;
  align-items: center;
  gap: 22px;
  width: 102px;
  height: 21px;
  margin-top: 3px;
  padding-left: 26px;
  border-right: 1px solid #9a9a9a;
}

.nav-l {
  display: inline-block;
  border-top: 4px solid transparent;
  border-bottom: 4px solid transparent;
  border-right: 4px solid #c4c4c4;
}

.nav-l.dark {
  border-right-color: #555;
}

.nav-r {
  display: inline-block;
  border-top: 4px solid transparent;
  border-bottom: 4px solid transparent;
  border-left: 4px solid #c4c4c4;
}

.s-tab {
  position: relative;
  display: flex;
  align-items: center;
  justify-content: center;
  height: 21px;
  margin-top: 3px;
  padding-bottom: 2px;
  border-right: 1px solid #9a9a9a;
  font-size: 13px;
  color: #555;
  white-space: nowrap;
  flex-shrink: 0;
}

.s-tab.active {
  height: 24px;
  margin-top: 0;
  padding-bottom: 0;
  background: #fff;
  border-left: 1px solid #9a9a9a;
  border-right: 1px solid #9a9a9a;
  border-bottom: 3px solid #217346;
  color: #217346;
}

.s-tab.blue,
.s-tab.orange {
  padding-bottom: 0;
}

.s-tab.blue span {
  display: flex;
  align-items: center;
  justify-content: center;
  width: 110px;
  height: 22px;
  margin-right: 3px;
  padding-bottom: 2px;
  background: #bdd7ee;
  color: #111;
}

.s-tab.orange span {
  display: flex;
  align-items: center;
  justify-content: center;
  width: 58px;
  height: 22px;
  margin-right: 1px;
  padding-bottom: 2px;
  background: #f4b183;
  color: #111;
}

.add-sheet {
  display: flex;
  margin: 6px 0 0 33px;
}

.h-dots {
  width: 2px;
  height: 11px;
  margin: 8px 0 0 159px;
  background: repeating-linear-gradient(#aaa 0 2px, transparent 2px 4px);
}

.h-scroll {
  display: flex;
  width: 505px;
  height: 15px;
  margin: 6px 0 0 15px;
  background: #d8d8d8;
}

.h-arrow {
  display: flex;
  align-items: center;
  justify-content: center;
  width: 17px;
  background: #fff;
  border: 1px solid #aaa;
}

.h-thumb {
  width: 16px;
  background: #fff;
  border: 1px solid #aaa;
  border-left: 0;
}

/* 状态栏 */
.statusbar {
  display: flex;
  align-items: center;
  height: 21px;
  background: #f1f1f1;
  color: #555;
}

.st-1 {
  margin-left: 7px;
}

.st-2 {
  margin-left: 18px;
}

.st-ico {
  margin-left: 17px;
}

.view {
  display: flex;
  align-items: center;
  justify-content: center;
  width: 36px;
  height: 21px;
  margin-left: 3px;
}

.view.on {
  margin-left: 1280px;
  background: #c6c6c6;
}

.zoom-minus {
  width: 7px;
  height: 2px;
  margin-left: 6px;
  background: #666;
}

.zoom-line {
  position: relative;
  width: 98px;
  height: 1px;
  margin-left: 4px;
  background: #999;
}

.zoom-line i {
  position: absolute;
  left: 48px;
  top: -5px;
  width: 4px;
  height: 11px;
  background: #555;
}

.zoom-plus {
  margin-left: 2px;
  font-size: 13px;
  font-weight: 700;
  color: #555;
}

.zoom-val {
  margin-left: 15px;
  color: #444;
}

.taskbar {
  height: 6px;
  background: #1d3a40;
  border-top: 1px solid #217346;
}

.taskbar i {
  display: block;
  width: 160px;
  height: 5px;
  margin-left: 629px;
  background: #3f5a5e;
}

/* 覆盖层 */
.arrow {
  position: absolute;
  left: 1439px;
  top: 310px;
  filter: drop-shadow(3px 2px 2px rgba(0, 0, 0, 0.45));
}

.cursor {
  position: absolute;
  left: 1523px;
  top: 390px;
}

.stamp {
  position: absolute;
  left: 1258px;
  top: 917px;
}

.ime {
  position: absolute;
  left: 947px;
  top: 1010px;
  display: flex;
  align-items: center;
  justify-content: center;
  gap: 3px;
  width: 60px;
  height: 27px;
  background: #fff;
  border-radius: 5px;
  box-shadow: 0 0 4px rgba(0, 0, 0, 0.45);
  font-size: 12px;
  color: #333;
}

.moon {
  font-size: 11px;
}

.watermark {
  position: absolute;
  left: 1531px;
  top: 994px;
  display: flex;
  gap: 0;
}

.wm-text {
  margin-top: 1px;
}

.wm-cn {
  font-size: 20.500px;
  line-height: 24px;
  font-weight: 700;
  color: rgba(58, 130, 205, 0.9);
  white-space: nowrap;
}

.wm-url {
  margin-top: 2px;
  font-size: 16px;
  line-height: 18px;
  color: rgba(70, 190, 125, 0.9);
  white-space: nowrap;
}
</style>
